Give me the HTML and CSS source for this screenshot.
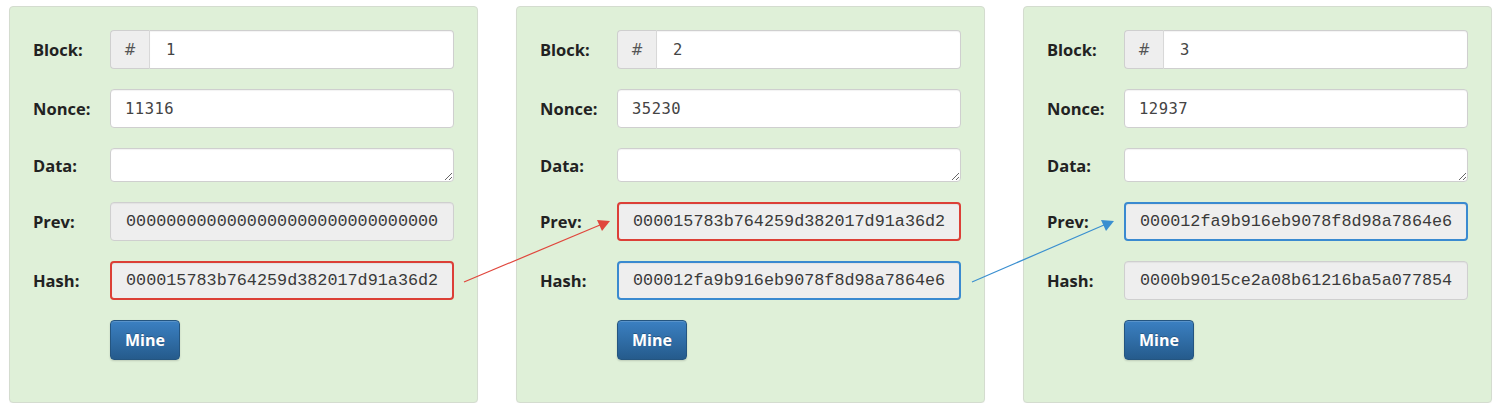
FILE: index.html
```html
<!DOCTYPE html>
<html lang="en">
<head>
    <meta charset="UTF-8">
    <title>Blockchain</title>
    <link rel="stylesheet" href="styles.css">
</head>
<body>
    <div class="chain">
        <!-- Block 1 -->
        <div class="block-card">
            <div class="row">
                <label>Block:</label>
                <div class="input-group">
                    <span class="addon">#</span>
                    <input class="field field-num" type="text" value="1">
                </div>
            </div>
            <div class="row">
                <label>Nonce:</label>
                <input class="field field-num" type="text" value="11316">
            </div>
            <div class="row">
                <label>Data:</label>
                <textarea class="field field-data" rows="1"></textarea>
            </div>
            <div class="row">
                <label>Prev:</label>
                <input class="field field-hash" type="text" readonly value="0000000000000000000000000000000">
            </div>
            <div class="row">
                <label>Hash:</label>
                <input class="field field-hash link-red" type="text" readonly value="000015783b764259d382017d91a36d2">
            </div>
            <div class="row">
                <span></span>
                <div><button class="btn-mine">Mine</button></div>
            </div>
        </div>

        <!-- Block 2 -->
        <div class="block-card">
            <div class="row">
                <label>Block:</label>
                <div class="input-group">
                    <span class="addon">#</span>
                    <input class="field field-num" type="text" value="2">
                </div>
            </div>
            <div class="row">
                <label>Nonce:</label>
                <input class="field field-num" type="text" value="35230">
            </div>
            <div class="row">
                <label>Data:</label>
                <textarea class="field field-data" rows="1"></textarea>
            </div>
            <div class="row">
                <label>Prev:</label>
                <input class="field field-hash link-red" type="text" readonly value="000015783b764259d382017d91a36d2">
            </div>
            <div class="row">
                <label>Hash:</label>
                <input class="field field-hash link-blue" type="text" readonly value="000012fa9b916eb9078f8d98a7864e6">
            </div>
            <div class="row">
                <span></span>
                <div><button class="btn-mine">Mine</button></div>
            </div>
        </div>

        <!-- Block 3 -->
        <div class="block-card">
            <div class="row">
                <label>Block:</label>
                <div class="input-group">
                    <span class="addon">#</span>
                    <input class="field field-num" type="text" value="3">
                </div>
            </div>
            <div class="row">
                <label>Nonce:</label>
                <input class="field field-num" type="text" value="12937">
            </div>
            <div class="row">
                <label>Data:</label>
                <textarea class="field field-data" rows="1"></textarea>
            </div>
            <div class="row">
                <label>Prev:</label>
                <input class="field field-hash link-blue" type="text" readonly value="000012fa9b916eb9078f8d98a7864e6">
            </div>
            <div class="row">
                <label>Hash:</label>
                <input class="field field-hash" type="text" readonly value="0000b9015ce2a08b61216ba5a077854">
            </div>
            <div class="row">
                <span></span>
                <div><button class="btn-mine">Mine</button></div>
            </div>
        </div>
    </div>

    <!-- Arrows linking each hash to the next block's prev -->
    <svg class="links" width="1500" height="414" viewBox="0 0 1500 414">
        <line x1="464" y1="282" x2="600" y2="225" stroke="#e0463c" stroke-width="1.2"/>
        <polygon points="610,221 597,220 602,231" fill="#e0463c"/>
        <line x1="972" y1="282" x2="1104" y2="225" stroke="#3a8fd0" stroke-width="1.2"/>
        <polygon points="1114,221 1101,220 1106,231" fill="#3a8fd0"/>
    </svg>
</body>
</html>
```

FILE: styles.css
```css
/* General */
body {
    margin: 0;
    background: #ffffff;
    font-family: 'Open Sans', sans-serif;
    color: #222;
}

.chain {
    display: flex;
    gap: 38px;
    padding: 6px 0 0 9px;
}

/* Block card */
.block-card {
    width: 469px;
    box-sizing: border-box;
    padding: 23px 23px 42px;
    background: #dff0d8;
    border: 1px solid #d4dccf;
    border-radius: 4px;
    box-shadow: 0 1px 1px rgba(0, 0, 0, 0.04);
    display: flex;
    flex-direction: column;
    gap: 20px;
}

.row {
    display: grid;
    grid-template-columns: 77px 344px;
    align-items: center;
}

.row label {
    font-size: 16.5px;
    font-weight: 700;
    color: #222;
}

/* Inputs */
.field {
    box-sizing: border-box;
    width: 100%;
    height: 39px;
    margin: 0;
    padding: 0 14px;
    border: 1px solid #cfcfcf;
    border-radius: 4px;
    background: #fff;
    color: #444;
    outline: none;
    box-shadow: inset 0 1px 1px rgba(0, 0, 0, 0.05);
}

.field-num {
    font-family: 'DejaVu Sans Mono', monospace;
    font-size: 15.5px;
    letter-spacing: 0.5px;
}

.field-data {
    display: block;
    height: 34px;
    resize: vertical;
    font-family: 'DejaVu Sans Mono', monospace;
    font-size: 15px;
}

.field-hash {
    background: #eeeeee;
    font-family: 'Liberation Mono', monospace;
    font-size: 16.8px;
    color: #3a3a3a;
    padding-left: 15px;
}

.link-red {
    border: 2px solid #dc3f37;
    padding: 0 13px 0 14px;
}

.link-blue {
    border: 2px solid #3a8ad0;
    padding: 0 13px 0 14px;
}

.input-group {
    display: flex;
}

.addon {
    box-sizing: border-box;
    width: 40px;
    height: 39px;
    flex-shrink: 0;
    display: flex;
    align-items: center;
    justify-content: center;
    background: #eeeeee;
    border: 1px solid #cfcfcf;
    border-right: 1px solid #d8d8d8;
    border-radius: 4px 0 0 4px;
    font-family: 'DejaVu Sans', sans-serif;
    font-size: 15px;
    color: #555;
}

.input-group .field {
    border-left: 0;
    border-radius: 0 4px 4px 0;
    padding-left: 16px;
}

/* Mine button */
.btn-mine {
    width: 70px;
    height: 40px;
    padding: 0;
    border: 1px solid #245580;
    border-radius: 4px;
    background: linear-gradient(to bottom, #3b80c2 0%, #255b8c 100%);
    color: #fff;
    font-family: 'Open Sans', sans-serif;
    font-size: 16px;
    font-weight: 700;
    text-shadow: 0 -1px 0 rgba(0, 0, 0, 0.25);
    box-shadow: inset 0 1px 0 rgba(255, 255, 255, 0.15), 0 1px 2px rgba(0, 0, 0, 0.15);
    cursor: pointer;
}

/* Arrow overlay */
.links {
    position: absolute;
    top: 0;
    left: 0;
    pointer-events: none;
}
```
